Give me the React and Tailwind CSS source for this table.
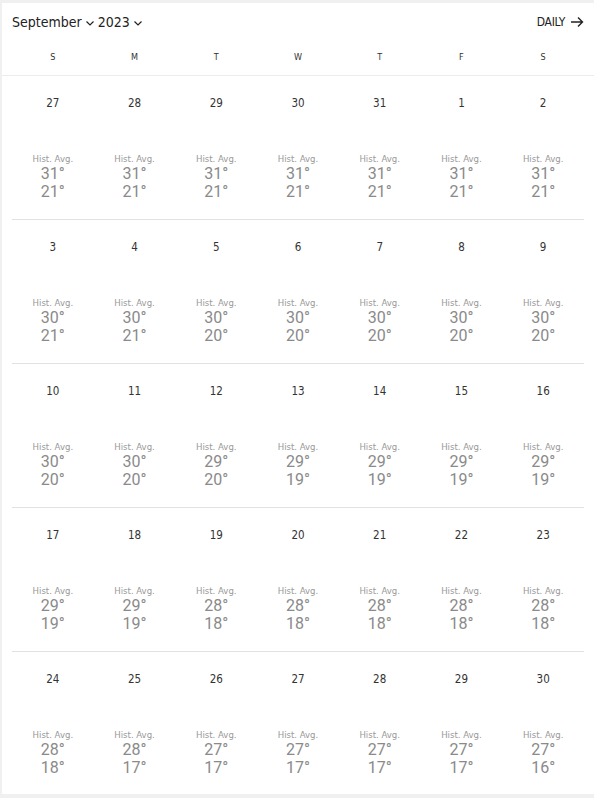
import React from 'react';

const font = { fontFamily: '"DejaVu Sans Condensed", "Roboto Condensed", Roboto, sans-serif' };

const weeks = [
  { days: [27, 28, 29, 30, 31, 1, 2], hi: [31, 31, 31, 31, 31, 31, 31], lo: [21, 21, 21, 21, 21, 21, 21] },
  { days: [3, 4, 5, 6, 7, 8, 9], hi: [30, 30, 30, 30, 30, 30, 30], lo: [21, 21, 20, 20, 20, 20, 20] },
  { days: [10, 11, 12, 13, 14, 15, 16], hi: [30, 30, 29, 29, 29, 29, 29], lo: [20, 20, 20, 19, 19, 19, 19] },
  { days: [17, 18, 19, 20, 21, 22, 23], hi: [29, 29, 28, 28, 28, 28, 28], lo: [19, 19, 18, 18, 18, 18, 18] },
  { days: [24, 25, 26, 27, 28, 29, 30], hi: [28, 28, 27, 27, 27, 27, 27], lo: [18, 17, 17, 17, 17, 17, 16] },
];

const weekdays = ['S', 'M', 'T', 'W', 'T', 'F', 'S'];

const Chevron = () => (
  <svg width="10" height="10" viewBox="0 0 10 10" className="mx-[3px] mt-[2px]">
    <path d="M1.5 3.5 L5 7 L8.5 3.5" fill="none" stroke="#222" strokeWidth="1.2" />
  </svg>
);

export default function App() {
  return (
    <div className="min-h-screen bg-[#f0f0f0] pt-[3px] pl-[2px]" style={font}>
      <div className="bg-white h-[791px]">
        <div className="flex items-center justify-between h-[38px] px-[10px]">
          <div className="flex items-center text-[14px] text-[#222]">
            <span>September</span>
            <Chevron />
            <span>2023</span>
            <Chevron />
          </div>
          <div className="flex items-center text-[12px] text-[#222] tracking-tight">
            <span>DAILY</span>
            <svg width="14" height="12" viewBox="0 0 14 12" className="ml-[5px]">
              <path d="M1 6 H12.5 M8 1.5 L12.5 6 L8 10.5" fill="none" stroke="#222" strokeWidth="1.4" />
            </svg>
          </div>
        </div>
        <div className="grid grid-cols-7 h-[34px] items-center mx-[10px] text-[9px] text-[#333]">
          {weekdays.map((d, i) => (
            <div key={i} className="text-center">{d}</div>
          ))}
        </div>
        <div className="border-t border-[#ececec]" />
        <div className="px-[10px]">
          {weeks.map((w, wi) => (
            <div
              key={wi}
              className={`grid grid-cols-7 h-[144px] ${wi < weeks.length - 1 ? 'border-b border-[#e2e2e2]' : ''}`}
            >
              {w.days.map((d, i) => (
                <div key={i} className="flex flex-col items-center">
                  <div className="mt-[20px] h-[14px] text-[11.5px] text-[#333] leading-[14px]">{d}</div>
                  <div className="mt-[43px] text-[9.5px] leading-[12px] text-[#999]">Hist. Avg.</div>
                  <div className="text-[16px] leading-[18px] text-[#8a8a8a]" style={{ fontFamily: 'Roboto, sans-serif' }}>{w.hi[i]}°</div>
                  <div className="text-[16px] leading-[18px] text-[#8a8a8a]" style={{ fontFamily: 'Roboto, sans-serif' }}>{w.lo[i]}°</div>
                </div>
              ))}
            </div>
          ))}
        </div>
      </div>
    </div>
  );
}
